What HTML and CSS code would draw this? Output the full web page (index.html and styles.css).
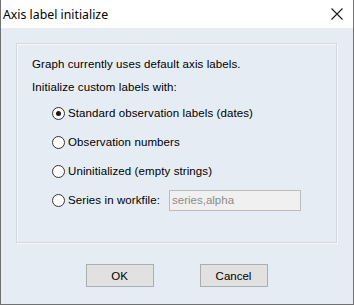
FILE: index.html
```html
<!DOCTYPE html>
<html lang="en">
<head>
	<meta charset="UTF-8">
	<title>Axis label initialize</title>
	<link rel="stylesheet" href="styles.css">
</head>
<body>
	<div class="window">
		<div class="titlebar">
			<span class="title">Axis label initialize</span>
			<svg class="close" width="12" height="12" viewBox="0 0 12 12">
				<path d="M0.5 0.5 L11.5 11.5 M11.5 0.5 L0.5 11.5" stroke="#1a1a1a" stroke-width="1.1" fill="none"/>
			</svg>
		</div>
		<div class="dialog">
			<div class="group">
				<p class="line">Graph currently uses default axis labels.</p>
				<p class="line">Initialize custom labels with:</p>
				<ul class="options">
					<li class="opt"><span class="radio checked"></span>Standard observation labels (dates)</li>
					<li class="opt"><span class="radio"></span>Observation numbers</li>
					<li class="opt"><span class="radio"></span>Uninitialized (empty strings)</li>
					<li class="opt"><span class="radio"></span>Series in workfile:<span class="field">series,alpha</span></li>
				</ul>
			</div>
			<div class="buttons">
				<button>OK</button>
				<button>Cancel</button>
			</div>
		</div>
	</div>
</body>
</html>
```

FILE: styles.css
```css
body,p,ul,li{
	margin: 0;
	padding: 0;
}
body{
	background: #fff;
	font-family: Tahoma, "Liberation Sans", Arial, sans-serif;
	font-size: 11.5px;
	letter-spacing: 0.1px;
	color: #000;
}
.window{
	width: 354px;
	height: 305px;
	box-sizing: border-box;
	border: 1px solid #707070;
	border-top: none;
	display: flex;
	flex-direction: column;
}
.titlebar{
	height: 28px;
	background: #fff;
	display: flex;
	align-items: center;
	justify-content: space-between;
	padding: 0 10px 0 2px;
}
.title{
	font-family: "Noto Sans", "Open Sans", sans-serif;
	font-size: 12.3px;
	letter-spacing: 0;
	color: #000;
}
.close{
	display: block;
}
.dialog{
	flex: 1;
	background: #e6ecf3;
	padding: 15px 16px 0 15px;
	display: flex;
	flex-direction: column;
}
.group{
	height: 200px;
	box-sizing: border-box;
	border: 1px solid #d3d9e0;
	box-shadow: inset 1px 1px 0 #f6f8fb, 1px 1px 0 #f6f8fb;
	padding: 9px 14px 0 15px;
}
.line{
	height: 14px;
	line-height: 14px;
	margin-top: 4px;
}
.line + .line{
	margin-top: 9px;
}
.options{
	list-style: none;
	padding: 10px 0 0 20px;
}
.opt{
	display: flex;
	align-items: center;
	height: 18px;
	margin-bottom: 11px;
}
.radio{
	width: 11px;
	height: 11px;
	border: 1px solid #333;
	border-radius: 50%;
	background: #fff;
	margin-right: 3px;
	position: relative;
	flex: none;
}
.radio.checked::after{
	content: "";
	position: absolute;
	left: 3px;
	top: 3px;
	width: 5px;
	height: 5px;
	border-radius: 50%;
	background: #1a1a1a;
}
.field{
	margin-left: 9px;
	width: 132px;
	height: 21px;
	box-sizing: border-box;
	border: 1px solid #b9bcc0;
	background: #f0f0f0;
	color: #8c8c8c;
	line-height: 19px;
	padding-left: 2px;
	letter-spacing: 0;
}
.buttons{
	display: flex;
	justify-content: center;
	gap: 46px;
	margin-top: 21px;
}
button{
	width: 68px;
	height: 23px;
	border: 1px solid #adadad;
	background: #e1e1e1;
	font-family: Tahoma, "Liberation Sans", Arial, sans-serif;
	font-size: 11.5px;
	color: #000;
	padding: 0;
}
```
